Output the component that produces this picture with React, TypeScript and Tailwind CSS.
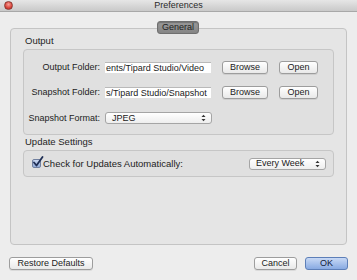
const FONT = "font-['Liberation_Sans','Lucida_Grande',sans-serif]"

function Button({ label, className = "" }: { label: string; className?: string }) {
  return (
    <div
      className={`flex h-[13px] items-center justify-center rounded-[3px] border border-[#9d9d9d] bg-gradient-to-b from-[#ffffff] to-[#e9e9e9] text-[9px] leading-none text-[#222] shadow-[0_1px_0_rgba(0,0,0,0.08)] ${className}`}
    >
      {label}
    </div>
  )
}

function Field({ text }: { text: string }) {
  return (
    <div className="flex h-[11px] w-[106px] items-center overflow-hidden whitespace-nowrap border-t border-[#b9b9b9] bg-white pl-[1px] text-[9px] leading-none text-[#1a1a1a]">
      {text}
    </div>
  )
}

function Stepper() {
  return (
    <svg width="5" height="8" viewBox="0 0 5 8" className="shrink-0">
      <path d="M0.5 3 L2.5 0.8 L4.5 3 Z" fill="#333" />
      <path d="M0.5 5 L2.5 7.2 L4.5 5 Z" fill="#333" />
    </svg>
  )
}

function Select({ text, className = "" }: { text: string; className?: string }) {
  return (
    <div
      className={`flex h-[12px] items-center justify-between rounded-[3px] border border-[#a5a5a5] bg-gradient-to-b from-[#ffffff] to-[#eeeeee] pl-[6px] pr-[5px] text-[9px] leading-none text-[#1a1a1a] ${className}`}
    >
      <span>{text}</span>
      <Stepper />
    </div>
  )
}

function FolderRow({ label, path }: { label: string; path: string }) {
  return (
    <div className="flex items-center">
      <span className="w-[81px] pr-[5px] text-right text-[9px] leading-none text-[#222]">{label}</span>
      <Field text={path} />
      <Button label="Browse" className="ml-[11px] w-[46px]" />
      <Button label="Open" className="ml-[11px] w-[39px]" />
    </div>
  )
}

export default function App() {
  return (
    <div className={`flex h-[280px] w-[357px] flex-col overflow-hidden bg-[#ededed] ${FONT}`}>
      {/* title bar */}
      <div className="relative flex h-[12px] shrink-0 items-center justify-center border-b border-[#a8a8a8] bg-gradient-to-b from-[#e6e6e6] to-[#c9c9c9]">
        <span className="text-[9px] leading-none text-[#2a2a2a]">Preferences</span>
        <div className="absolute left-[4px] top-[1px] h-[9px] w-[9px] rounded-full border border-[#8d3a33] bg-[radial-gradient(circle_at_50%_35%,#f7a097,#d9433a_60%,#b0261f)]" />
      </div>

      {/* tab */}
      <div className="relative z-10 mt-[9px] flex justify-center pr-[1px]">
        <div className="flex h-[13px] w-[42px] items-center justify-center rounded-[3px] border border-[#6f6f6f] bg-gradient-to-b from-[#9a9a9a] to-[#858585] text-[9px] leading-none text-[#1e1e1e] shadow-[inset_0_1px_1px_rgba(0,0,0,0.25)]">
          General
        </div>
      </div>

      {/* group box */}
      <div className="mx-[10px] -mt-[6px] flex h-[217px] flex-col rounded-[4px] border border-[#c4c4c4] bg-[#e5e5e5] px-[12px] pt-[6px]">
        <div className="pl-[2px] text-[9.5px] leading-[12px] text-[#1e1e1e]">Output</div>
        <div className="mt-[2px] flex h-[86px] w-[311px] flex-col gap-[12px] rounded-[4px] border border-[#c6c6c6] bg-[#e0e0e0] pt-[11px]">
          <FolderRow label="Output Folder:" path="ents/Tipard Studio/Video" />
          <FolderRow label="Snapshot Folder:" path="s/Tipard Studio/Snapshot" />
          <div className="mt-[1px] flex items-center">
            <span className="w-[81px] pr-[5px] text-right text-[9px] leading-none text-[#222]">Snapshot Format:</span>
            <Select text="JPEG" className="w-[107px]" />
          </div>
        </div>

        <div className="mt-[1px] pl-[2px] text-[9.5px] leading-[12px] text-[#1e1e1e]">Update Settings</div>
        <div className="mt-[2px] flex h-[27px] w-[311px] items-center rounded-[4px] border border-[#c6c6c6] bg-[#e0e0e0] pl-[8px] pr-[7px]">
          <div className="relative h-[9px] w-[9px] rounded-[2px] border border-[#6f7f9f] bg-gradient-to-b from-[#c9d6ef] to-[#93acd8]">
            <svg width="12" height="12" viewBox="0 0 12 12" className="absolute -left-[1px] -top-[4px]">
              <path d="M2 6.5 L4.5 9.5 L10.5 1" fill="none" stroke="#1f2f55" strokeWidth="1.8" strokeLinecap="round" strokeLinejoin="round" />
            </svg>
          </div>
          <span className="ml-[2px] text-[9.5px] leading-none text-[#222]">Check for Updates Automatically:</span>
          <Select text="Every Week" className="ml-auto w-[77px]" />
        </div>
      </div>

      {/* footer */}
      <div className="mt-[12px] flex items-center px-[9px]">
        <Button label="Restore Defaults" className="w-[84px]" />
        <Button label="Cancel" className="ml-auto w-[43px]" />
        <div className="ml-[8px] flex h-[13px] w-[43px] items-center justify-center rounded-[3px] border border-[#5d7fb8] bg-gradient-to-b from-[#c8d9f5] to-[#88aae2] text-[9px] leading-none text-[#10203a]">
          OK
        </div>
      </div>
    </div>
  )
}
